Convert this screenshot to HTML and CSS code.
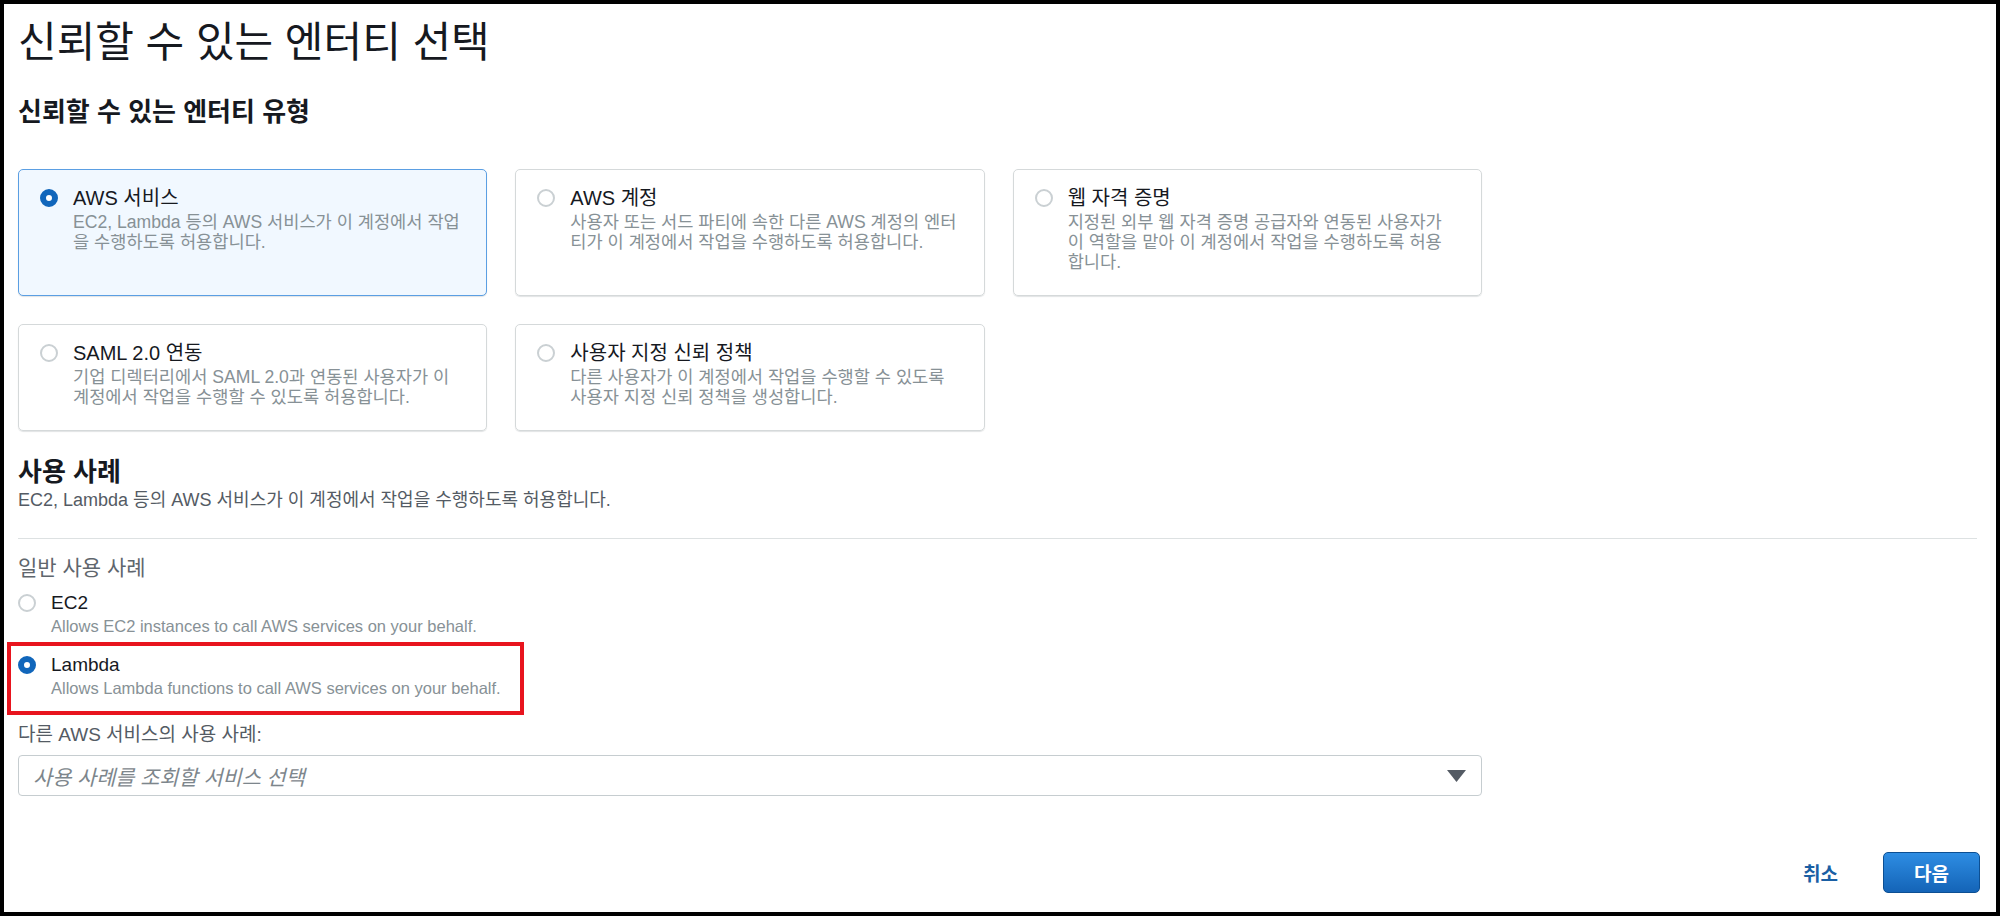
FILE: index.html
```html
<!DOCTYPE html>
<html>
<head>
	<meta charset="utf-8">
	<title>신뢰할 수 있는 엔터티 선택</title>
	<link rel="stylesheet" href="styles.css">
</head>
<body>
	<div class="frame">
	    <h1 class="page-title">신뢰할 수 있는 엔터티 선택</h1>

	    <h2 class="section-title">신뢰할 수 있는 엔터티 유형</h2>
	    <ul class="tiles">
	        <li class="tile tile--selected">
	            <span class="radio radio--on"></span>
	            <div>
	                <div class="tile-title">AWS 서비스</div>
	                <div class="tile-desc">EC2, Lambda 등의 AWS 서비스가 이 계정에서 작업<br>을 수행하도록 허용합니다.</div>
	            </div>
	        </li>
	        <li class="tile">
	            <span class="radio"></span>
	            <div>
	                <div class="tile-title">AWS 계정</div>
	                <div class="tile-desc">사용자 또는 서드 파티에 속한 다른 AWS 계정의 엔터<br>티가 이 계정에서 작업을 수행하도록 허용합니다.</div>
	            </div>
	        </li>
	        <li class="tile">
	            <span class="radio"></span>
	            <div>
	                <div class="tile-title">웹 자격 증명</div>
	                <div class="tile-desc">지정된 외부 웹 자격 증명 공급자와 연동된 사용자가<br>이 역할을 맡아 이 계정에서 작업을 수행하도록 허용<br>합니다.</div>
	            </div>
	        </li>
	        <li class="tile">
	            <span class="radio"></span>
	            <div>
	                <div class="tile-title">SAML 2.0 연동</div>
	                <div class="tile-desc">기업 디렉터리에서 SAML 2.0과 연동된 사용자가 이<br>계정에서 작업을 수행할 수 있도록 허용합니다.</div>
	            </div>
	        </li>
	        <li class="tile">
	            <span class="radio"></span>
	            <div>
	                <div class="tile-title">사용자 지정 신뢰 정책</div>
	                <div class="tile-desc">다른 사용자가 이 계정에서 작업을 수행할 수 있도록<br>사용자 지정 신뢰 정책을 생성합니다.</div>
	            </div>
	        </li>
	    </ul>

	    <h2 class="section-title section-title--use">사용 사례</h2>
	    <p class="section-desc">EC2, Lambda 등의 AWS 서비스가 이 계정에서 작업을 수행하도록 허용합니다.</p>
	    <hr class="divider">

	    <div class="group-label">일반 사용 사례</div>
	    <div class="option">
	        <span class="radio"></span>
	        <div>
	            <div class="option-title">EC2</div>
	            <div class="option-desc">Allows EC2 instances to call AWS services on your behalf.</div>
	        </div>
	    </div>
	    <div class="option option--marked">
	        <span class="radio radio--on"></span>
	        <div>
	            <div class="option-title">Lambda</div>
	            <div class="option-desc">Allows Lambda functions to call AWS services on your behalf.</div>
	        </div>
	    </div>

	    <div class="field-label">다른 AWS 서비스의 사용 사례:</div>
	    <div class="select">
	        <span class="select-placeholder">사용 사례를 조회할 서비스 선택</span>
	        <svg class="select-arrow" width="19" height="12" viewBox="0 0 19 12"><polygon points="0,0 19,0 9.5,12" fill="#545b64"/></svg>
	    </div>

	    <div class="actions">
	        <a class="link-btn" href="#">취소</a>
	        <button class="btn-primary" type="button">다음</button>
	    </div>
	</div>
</body>
</html>
```

FILE: styles.css
```css
* {
    box-sizing: border-box;
}

body {
    margin: 0;
    background: #fff;
    font-family: "Liberation Sans", "Noto Sans CJK KR", sans-serif;
    color: #16191f;
}

ul {
    margin: 0;
    padding: 0;
    list-style: none outside none;
}

.frame {
    display: flex;
    flex-direction: column;
    height: 916px;
    border: 4px solid #000;
    padding: 16px 16px 19px 14px;
}

.page-title {
    margin: 0;
    font-size: 42px;
    line-height: 46px;
    font-weight: 400;
}

.section-title {
    margin: 31px 0 0;
    font-size: 26px;
    line-height: 30px;
    font-weight: 700;
}

.section-title--use {
    margin-top: 26px;
}

/* 엔터티 유형 타일 */
.tiles {
    display: grid;
    grid-template-columns: repeat(3, 1fr);
    gap: 28px;
    width: 1464px;
    margin-top: 42px;
}

.tile {
    display: flex;
    align-items: flex-start;
    gap: 15px;
    padding: 16px 12px 23px 21px;
    border: 1px solid #d5d9da;
    border-radius: 5px;
    box-shadow: 0 1px 1px rgba(0, 28, 36, 0.12);
}

.tile--selected {
    background: #f1f8ff;
    border-color: #5b9fe3;
}

.tile-title,
.option-title {
    font-size: 20px;
    line-height: 24px;
}

.tile-desc {
    margin-top: 2px;
    font-size: 17.6px;
    line-height: 20px;
    color: #879196;
    white-space: nowrap;
}

.radio {
    flex: none;
    width: 18px;
    height: 18px;
    margin-top: 3px;
    border: 2px solid #cad0d3;
    border-radius: 50%;
    background: #fff;
}

.radio--on {
    border: 6px solid #1166bb;
}

/* 사용 사례 */
.section-desc {
    margin: 2px 0 0;
    font-size: 18px;
    line-height: 22px;
    color: #545b64;
}

.divider {
    margin: 27px 3px 0 0;
    border: none;
    border-top: 1px solid #dde1e2;
}

.group-label {
    margin-top: 16px;
    font-size: 21px;
    line-height: 26px;
    color: #5f666d;
}

.option {
    display: flex;
    align-items: flex-start;
    gap: 15px;
    margin-top: 10px;
}

.option .option-title {
    font-size: 19px;
}

.option-desc {
    font-size: 16.5px;
    line-height: 22px;
    color: #879196;
}

.option--marked {
    align-self: flex-start;
    width: 517px;
    margin: 5px 0 0 -11px;
    padding: 7px 0 12px 7px;
    border: 4px solid #e8141e;
}

.field-label {
    margin-top: 8px;
    font-size: 19px;
    line-height: 24px;
    color: #545b64;
}

.select {
    display: flex;
    align-items: center;
    justify-content: space-between;
    width: 1464px;
    height: 41px;
    margin-top: 8px;
    padding: 0 15px 0 14px;
    border: 1px solid #c6cdd0;
    border-radius: 4px;
}

.select-placeholder {
    font-size: 20.8px;
    font-style: italic;
    color: #7d868c;
}

/* 하단 버튼 */
.actions {
    display: flex;
    justify-content: flex-end;
    align-items: center;
    gap: 45px;
    margin-top: auto;
}

.link-btn {
    font-size: 19px;
    font-weight: 700;
    color: #1a5fa4;
    text-decoration: none;
}

.btn-primary {
    width: 97px;
    height: 41px;
    border: 1px solid #0c4f93;
    border-radius: 5px;
    background: linear-gradient(#2e8de3, #1464b7);
    color: #fff;
    font-family: inherit;
    font-size: 19px;
    font-weight: 700;
}
```
